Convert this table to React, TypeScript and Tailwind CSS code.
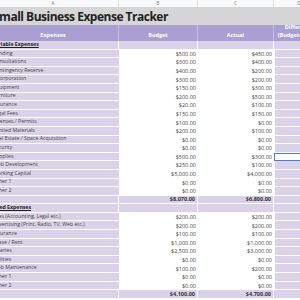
import React from 'react';

type Row = [string, string, string];

const variableRows: Row[] = [
  ['Funding', '$500.00', '$450.00'],
  ['Consultations', '$300.00', '$400.00'],
  ['Contingency Reserve', '$400.00', '$200.00'],
  ['Incorporation', '$300.00', '$200.00'],
  ['Equipment', '$150.00', '$300.00'],
  ['Furniture', '$200.00', '$500.00'],
  ['Insurance', '$20.00', '$100.00'],
  ['Legal Fees', '$150.00', '$150.00'],
  ['Licenses / Permits', '$100.00', '$0.00'],
  ['Limited Materials', '$200.00', '$100.00'],
  ['Real Estate / Space Acquisition', '$0.00', '$0.00'],
  ['Security', '$0.00', '$0.00'],
  ['Supplies', '$500.00', '$300.00'],
  ['Web Development', '$250.00', '$100.00'],
  ['Working Capital', '$5,000.00', '$4,000.00'],
  ['Other 1', '$0.00', '$0.00'],
  ['Other 2', '$0.00', '$0.00'],
];

const fixedRows: Row[] = [
  ['Fees (Accounting, Legal etc.)', '$200.00', '$200.00'],
  ['Advertising (Print, Radio, TV, Web etc.)', '$200.00', '$200.00'],
  ['Insurance', '$100.00', '$100.00'],
  ['Lease / Rent', '$1,000.00', '$1,000.00'],
  ['Salaries', '$2,500.00', '$3,000.00'],
  ['Utilities', '$0.00', '$0.00'],
  ['Web Maintenance', '$100.00', '$200.00'],
  ['Other 1', '$0.00', '$0.00'],
  ['Other 2', '$0.00', '$0.00'],
];

function SectionRow({ label }: { label: string }) {
  return (
    <div className="flex h-[8.6px] bg-[#d9d2e9] border-b border-white">
      <div className="w-[131px] shrink-0 pl-[4px] flex items-center text-[5.2px] font-bold underline text-[#222] whitespace-nowrap overflow-hidden border-r border-white">
        {label}
      </div>
      <div className="w-[79px] shrink-0 border-r border-white" />
      <div className="w-[76px] shrink-0 border-r border-white" />
      <div className="w-[50px] shrink-0" />
    </div>
  );
}

function DataRow({ row, selected }: { row: Row; selected?: boolean }) {
  const [label, budget, actual] = row;
  return (
    <div className="flex h-[8.6px] text-[5.5px] text-[#444]">
      <div className="w-[131px] shrink-0 pl-[5px] flex items-center bg-[#d9d2e9] border-b border-white whitespace-nowrap overflow-hidden text-[5.2px]">
        {label}
      </div>
      <div className="w-[79px] shrink-0 pr-[2px] flex items-center justify-end bg-white">{budget}</div>
      <div className="w-[76px] shrink-0 pr-[2px] flex items-center justify-end bg-white">{actual}</div>
      <div
        className={
          selected
            ? 'w-[50px] shrink-0 bg-white border border-[#4a7bd6]'
            : 'w-[50px] shrink-0 bg-[#d9d2e9] border-b border-l border-white'
        }
      />
    </div>
  );
}

function TotalRow({ budget, actual }: { budget: string; actual: string }) {
  return (
    <div className="flex h-[8.6px] bg-[#d9d2e9] border-b border-white text-[5.5px] font-bold text-[#333]">
      <div className="w-[131px] shrink-0 border-r border-white" />
      <div className="w-[79px] shrink-0 pr-[2px] flex items-center justify-end border-r border-white">{budget}</div>
      <div className="w-[76px] shrink-0 pr-[2px] flex items-center justify-end border-r border-white">{actual}</div>
      <div className="w-[50px] shrink-0" />
    </div>
  );
}

export default function App() {
  return (
    <div className="w-[300px] h-[300px] overflow-hidden bg-white font-['Open_Sans','Liberation_Sans',sans-serif]">
      <div className="ml-[-12px] w-[336px]">
        {/* Column letters */}
        <div className="flex h-[8px] bg-[#f8f9fa] border-b border-[#d4d4d4] text-[4.5px] text-[#777]">
          <div className="w-[131px] shrink-0 flex items-center justify-center border-r border-[#e2e2e2]">A</div>
          <div className="w-[79px] shrink-0 flex items-center justify-center border-r border-[#e2e2e2]">B</div>
          <div className="w-[76px] shrink-0 flex items-center justify-center border-r border-[#e2e2e2]">C</div>
          <div className="w-[50px] shrink-0 flex items-center justify-center">D</div>
        </div>

        {/* Title */}
        <div className="h-[17px] bg-[#d6d6d6] flex items-center pl-[5px] text-[12px] font-bold text-[#222] whitespace-nowrap tracking-[-0.5px]">
          Small Business Expense Tracker
        </div>

        {/* Header */}
        <div className="flex h-[16px] bg-[#a99fd2] text-white text-[5.5px] font-bold">
          <div className="w-[131px] shrink-0 flex items-end justify-center pb-[2px] border-r border-[#c4bce2]">Expenses</div>
          <div className="w-[79px] shrink-0 flex items-end justify-center pb-[2px] border-r border-[#c4bce2]">Budget</div>
          <div className="w-[76px] shrink-0 flex items-end justify-center pb-[2px] border-r border-[#c4bce2]">Actual</div>
          <div className="w-[50px] shrink-0 flex flex-col items-center justify-end pb-[2px] leading-[8px]">
            <span>Difference</span>
            <span>(Budget-Actual)</span>
          </div>
        </div>

        <SectionRow label="Variable Expenses" />
        {variableRows.map((r, i) => (
          <DataRow key={`v-${i}`} row={r} selected={r[0] === 'Supplies'} />
        ))}
        <TotalRow budget="$8,070.00" actual="$6,800.00" />

        <SectionRow label="Fixed Expenses" />
        {fixedRows.map((r, i) => (
          <DataRow key={`f-${i}`} row={r} />
        ))}
        <TotalRow budget="$4,100.00" actual="$4,700.00" />
      </div>
    </div>
  );
}
